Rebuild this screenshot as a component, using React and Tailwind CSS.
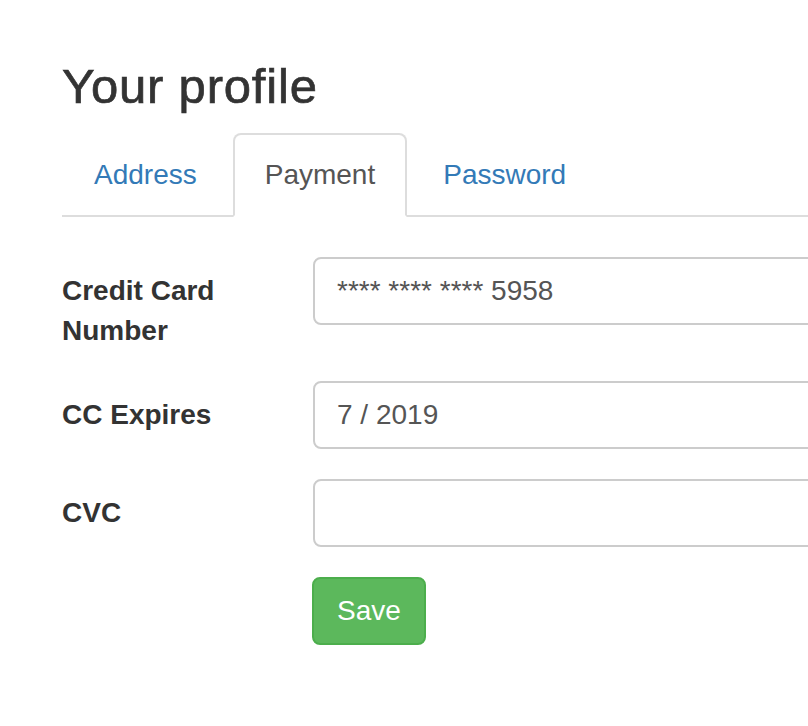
const TABS = [
  { id: "address", label: "Address" },
  { id: "payment", label: "Payment" },
  { id: "password", label: "Password" },
];

const FIELDS = [
  { id: "cc", label: "Credit Card Number", value: "**** **** **** 5958" },
  { id: "exp", label: "CC Expires", value: "7 / 2019" },
  { id: "cvc", label: "CVC", value: "" },
];

export default function App() {
  const active = "payment";

  return (
    <div className="min-h-screen w-full overflow-hidden bg-white font-['Liberation_Sans',Arial,sans-serif] text-[28px] leading-[40px] text-[#333]">
      <div className="w-[900px] pl-[62px] pt-[60px]">
        <h2 className="mb-[20px] text-[49px] font-medium leading-[53px] tracking-[0.8px] text-[#333] [-webkit-text-stroke:0.7px_#333]">
          Your profile
        </h2>

        <ul className="flex border-b-2 border-[#ddd]">
          {TABS.map((tab) => {
            const isActive = tab.id === active;
            return (
              <li key={tab.id} className="-mb-[2px] mr-[4px]">
                <a
                  href="#"
                  className={`block rounded-t-[8px] border-2 px-[30px] py-[20px] ${
                    isActive
                      ? "border-[#ddd] border-b-transparent bg-white text-[#555]"
                      : "border-transparent text-[#337ab7]"
                  }`}
                >
                  {tab.label}
                </a>
              </li>
            );
          })}
        </ul>

        <form className="pt-[40px]">
          {FIELDS.map((field) => (
            <div key={field.id} className="mb-[30px] flex">
              <label className="mr-[60px] w-[191px] shrink-0 pt-[14px] font-bold">{field.label}</label>
              <input
                type="text"
                defaultValue={field.value}
                className="h-[68px] flex-1 rounded-[8px] border-2 border-[#ccc] bg-white px-[22px] py-[12px] text-[28px] text-[#555] outline-none"
              />
            </div>
          ))}
          <div className="ml-[250px]">
            <button
              type="button"
              className="h-[68px] rounded-[8px] border-2 border-[#4cae4c] bg-[#5cb85c] px-[23px] text-[28px] text-white"
            >
              Save
            </button>
          </div>
        </form>
      </div>
    </div>
  );
}
